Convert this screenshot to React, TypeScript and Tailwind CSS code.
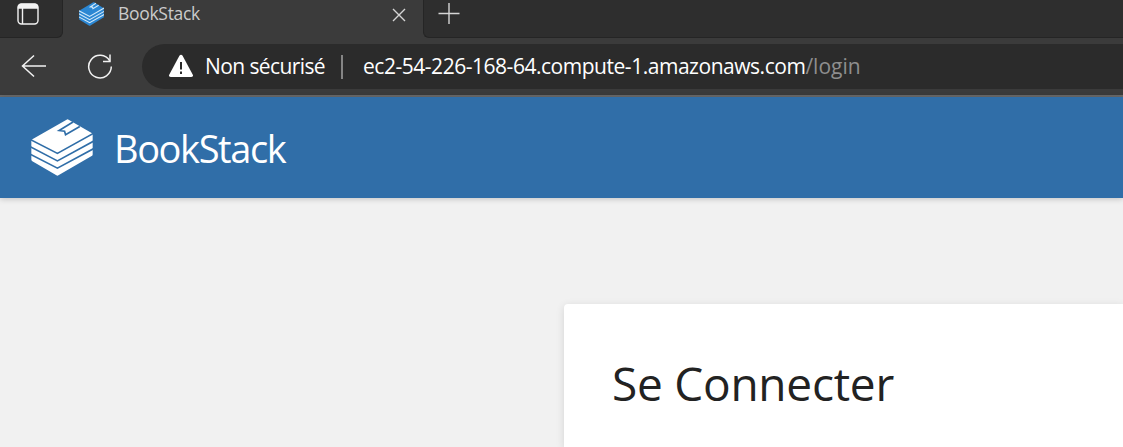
import React from "react";

function Books({ className, fill, line, weight }: { className: string; fill: string; line: string; weight: number }) {
  return (
    <svg className={className} viewBox="20 19 183 174" preserveAspectRatio="none" fill="none">
      <path d="M24 81 125 21q3-2 6 0l68 41q3 2 3 5v60q0 3-3 5l-98 59q-3 2-6 0l-71-43q-3-2-3-5V86q0-3 3-5Z" fill={fill} />
      <g stroke={line} strokeWidth={weight}>
        <path d="M19 82 98 124 204 63M19 104 98 147 204 87M19 127 98 169 204 110" />
        <path d="M144 28 103 54 119 56 122 67 164 42" />
      </g>
    </svg>
  );
}

export default function App() {
  return (
    <div className="flex h-[447px] w-[1123px] flex-col overflow-hidden bg-[#f1f1f1] font-['Open_Sans','Noto_Sans',sans-serif]">
      <div className="flex h-[38px] shrink-0 bg-[#3b3b3b]">
        <div className="h-[38px] w-[63px] rounded-br-[6px] border-r border-b border-[#252525] bg-[#2e2e2e] pt-[3px] pl-[17px]">
          <svg className="h-[22px] w-[22px]" viewBox="0 0 22 22" fill="none" stroke="#f2f2f2" strokeWidth="1.4">
            <rect x="1" y="1" width="20" height="20" rx="3.5" />
            <path d="M1.5 5V4q0-2.500 2.500-2.500h14q2.500 0 2.500 2.500v1Z" fill="#f2f2f2" />
            <path d="M5.500 5v16" />
          </svg>
        </div>
        <div className="flex h-[38px] w-[360px] pl-[16px]">
          <Books className="mt-[2px] h-[24px] w-[25px]" fill="#2b87d3" line="#d4eafa" weight={8} />
          <span className="ml-[14px] w-[274px] text-[17.5px] leading-[26px] tracking-[-0.3px] text-[#cbcbcb]">BookStack</span>
          <svg className="mt-[8px] h-[14px] w-[14px]" viewBox="0 0 14 14" stroke="#d5d5d5" strokeWidth="1.4">
            <path d="m1 1 12 12M13 1 1 13" />
          </svg>
        </div>
        <div className="h-[38px] grow rounded-bl-[6px] border-b border-l border-[#252525] bg-[#2e2e2e] pt-[2px] pl-[14px]">
          <svg className="h-[23px] w-[23px]" viewBox="0 0 23 23" stroke="#d5d5d5" strokeWidth="1.4">
            <path d="M0.500 11.500h21M11 1v21" />
          </svg>
        </div>
      </div>
      <div className="flex h-[59px] shrink-0 border-b-2 border-[#696969] bg-[#3b3b3b] pt-[6px] pl-[21px]">
        <svg className="mt-[10px] h-[24px] w-[26px]" viewBox="0 0 26 24" fill="none" stroke="#f2f2f2" strokeWidth="1.5">
          <path d="M13 1.500 1.500 12 13 22.500M1.500 12H25" />
        </svg>
        <svg className="mt-[9px] ml-[40px] h-[27px] w-[26px]" viewBox="0 0 26 27" fill="none" stroke="#f2f2f2" strokeWidth="1.5">
          <path d="M24.300 13.600A11.300 11.300 0 1 1 22.700 7.800" />
          <path d="M23 1.500V8.500H16" />
        </svg>
        <div className="ml-[29px] flex h-[45px] grow rounded-l-full bg-[#2b2b2b] pl-[26px]">
          <svg className="mt-[10px] h-[24px] w-[26px]" viewBox="0 0 26 24">
            <path d="M11.400 1.800q1.600-2.300 3.200 0l10.200 19q.9 2.200-1.500 2.200H2.700q-2.400 0-1.500-2.200Z" fill="#fff" />
            <path d="M13 8v7.500M13 17.500v2.500" stroke="#2b2b2b" strokeWidth="2" />
          </svg>
          <span className="mt-[8px] ml-[11px] w-[136px] text-[21px] leading-[28px] tracking-[-0.6px] whitespace-nowrap text-white">Non sécurisé</span>
          <span className="mt-[11px] h-[24px] w-[2px] bg-[#858585]" />
          <span className="mt-[8px] ml-[20px] text-[21px] leading-[28px] tracking-[-0.47px] whitespace-nowrap text-white">
            ec2-54-226-168-64.compute-1.amazonaws.com<span className="tracking-[0px] text-[#8e8e8e]">/login</span>
          </span>
        </div>
      </div>
      <header className="z-10 flex h-[101px] shrink-0 bg-[#306ea8] pl-[31px] shadow-[0_1px_6px_rgba(0,0,0,0.2)]">
        <Books className="mt-[22px] h-[57px] w-[62px]" fill="#ffffff" line="#306ea8" weight={5} />
        <span className="mt-[25px] ml-[21px] text-[38px] leading-[52px] tracking-[-1.4px] whitespace-nowrap text-white">BookStack</span>
      </header>
      <main className="flex grow pt-[106px] pl-[564px]">
        <section className="grow rounded-tl-[4px] bg-white pt-[47px] pl-[48px] shadow-[0_2px_9px_rgba(0,0,0,0.12)]">
          <h1 className="text-[46px] leading-[64px] font-normal tracking-[-0.25px] whitespace-nowrap text-[#222222]">Se Connecter</h1>
        </section>
      </main>
    </div>
  );
}
